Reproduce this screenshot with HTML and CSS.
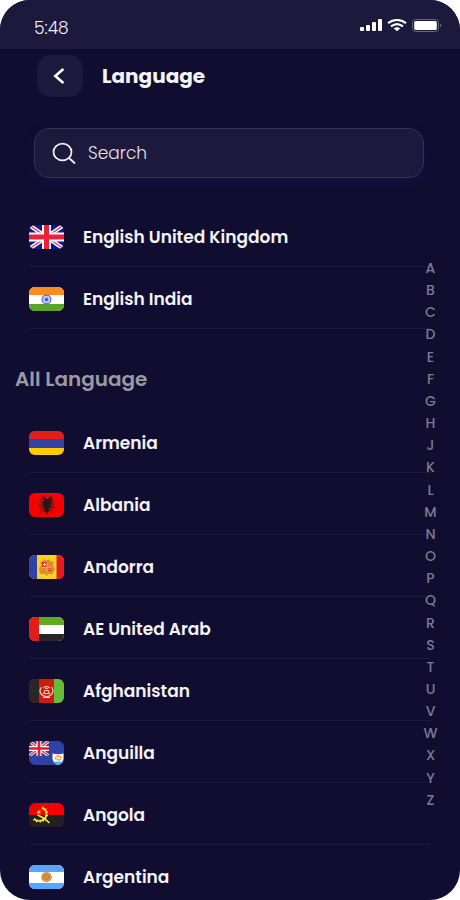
FILE: index.html
```html
<!DOCTYPE html>
<html lang="en">
<head>
<meta charset="utf-8">
<meta name="viewport" content="width=device-width, initial-scale=1">
<title>Language</title>
<link rel="stylesheet" href="styles.css">
</head>
<body>
<div class="screen">
  <div class="status">
    <span class="time">5:48</span>
    <div class="status-icons">
      <svg width="22" height="12" viewBox="0 0 22 12" fill="#fff" aria-hidden="true"><rect x="0" y="8" width="4" height="4" rx="1"/><rect x="6" y="6" width="4" height="6" rx="1"/><rect x="12" y="3" width="4" height="9" rx="1"/><rect x="18" y="0" width="4" height="12" rx="1"/></svg>
      <svg width="20" height="12" viewBox="0 0 20 12" aria-hidden="true"><g fill="none" stroke="#fff" stroke-width="2.200"><path d="M1 4.200Q10-2.200 19 4.200"/><path d="M4 7.400Q10 2.800 16 7.400"/></g><path d="M6.700 9.300Q10 7 13.300 9.300L10.600 11.700Q10 12.200 9.400 11.700Z" fill="#fff"/></svg>
      <svg width="30" height="13" viewBox="0 0 30 13" aria-hidden="true"><rect x=".5" y=".5" width="26" height="12" rx="3" fill="none" stroke="#686579"/><rect x="2.200" y="2" width="22.600" height="9" rx="1.500" fill="#fff"/><path d="M28 4.500Q31 6.500 28 8.500Z" fill="#686579"/></svg>
    </div>
  </div>
  <header class="top">
    <button class="back" type="button" aria-label="Back"><svg width="12" height="16" viewBox="0 0 12 16" fill="none" stroke="#fff" stroke-width="2.600" stroke-linecap="round" stroke-linejoin="miter"><path d="M9.500 1.700L2.300 8L9.500 14.300"/></svg></button>
    <h1>Language</h1>
  </header>
  <label class="search">
    <svg width="24" height="22" viewBox="0 0 24 22" fill="none" stroke="#eeedf3" stroke-width="1.800" stroke-linecap="round" aria-hidden="true"><ellipse cx="10.500" cy="10" rx="9" ry="8.400"/><path d="M17 16L22.500 21"/></svg>
    <input type="search" placeholder="Search" aria-label="Search">
  </label>
  <main class="content">
    <ul class="list">
      <li><svg class="flag" viewBox="0 0 35 24"><rect width="35" height="24" fill="#0b16a5"/><path d="M0 0L35 24M35 0L0 24" stroke="#fff" stroke-width="4.200"/><path d="M0 0L35 24M35 0L0 24" stroke="#e83552" stroke-width="1.300"/><path d="M17.500 0V24M0 12H35" stroke="#fff" stroke-width="9"/><path d="M17.500 0V24M0 12H35" stroke="#e8213c" stroke-width="5"/></svg><span>English United Kingdom</span></li>
      <li><svg class="flag" viewBox="0 0 35 24"><rect width="35" height="24" fill="#fff"/><rect width="35" height="8" fill="#ff8c1a"/><rect y="17" width="35" height="7" fill="#5ba626"/><circle cx="17.500" cy="12.500" r="4.400" fill="#dbe1fa" stroke="#5269d8" stroke-width="1.200"/><circle cx="17.500" cy="12.500" r="2" fill="#4a63dc"/><circle cx="17.500" cy="12.500" r="3" fill="none" stroke="#97a5ed" stroke-width=".8" stroke-dasharray="1 .6"/></svg><span>English India</span></li>
    </ul>
    <h2>All Language</h2>
    <ul class="list">
      <li><svg class="flag" viewBox="0 0 35 24"><rect width="35" height="24" fill="#3043a5"/><rect width="35" height="8" fill="#e31d1c"/><rect y="17" width="35" height="7" fill="#ffcb00"/></svg><span>Armenia</span></li>
      <li><svg class="flag" viewBox="0 0 35 24"><rect width="35" height="24" fill="#f90000"/><g fill="#291716"><path d="M17.500 6L15.500 3.500L12 4L14 5L12.500 7L15 7.500L14 10L16 14L15 18L17 19L17.800 23L18.800 19L20.500 18L19.500 14L22 10L21 7.500L23.500 7L22 5L24 4L20.500 3.500L18.500 6Z"/><path d="M13 8L23 8L21.500 14L18 17L14.500 14Z"/></g><g fill="none" stroke="#4a1513" stroke-width=".9"><path d="M15 12L11 5.500M15 13L10 8M15 14L9.500 11M15 14.500L9.500 14M15 15L10 18M16 16L12.500 20M20.500 12L24.500 5.500M20.500 13L25.500 8M20.500 14L26 11M20.500 14.500L26 14M20.500 15L25.500 18M19.500 16L23 20"/></g></svg><span>Albania</span></li>
      <li><svg class="flag" viewBox="0 0 35 24"><rect width="35" height="24" fill="#ffcf20"/><rect width="8" height="24" fill="#3043a5"/><rect x="27.500" width="7.500" height="24" fill="#e31d1c"/><path d="M11 7L14 6L15 4L17.500 5.500L20 4L21.500 6L25 7L24 10L26 14L23.500 19L19 19L17.500 21L16 19L11.500 19L9.800 14L12 10Z" fill="#c6993a"/><rect x="13" y="7" width="10" height="10" rx="1" fill="#f58027"/><path d="M13 7h5v5h-5z" fill="#e32b33"/><path d="M18.500 12.500h4v1h-4zM18.500 15h4v1h-4z" fill="#d63825"/><path d="M15.500 8v3M14 9.500h3" stroke="#efe1de"/><path d="M13 12.200h10M18 7v10" stroke="#ffd15d" stroke-width=".7"/></svg><span>Andorra</span></li>
      <li><svg class="flag" viewBox="0 0 35 24"><rect width="35" height="24" fill="#fff"/><rect width="35" height="8" fill="#5eaa22"/><rect y="17" width="35" height="7" fill="#272727"/><rect width="10" height="24" fill="#e31d1c"/></svg><span>AE United Arab</span></li>
      <li><svg class="flag" viewBox="0 0 35 24"><rect width="35" height="24" fill="#cf1b0b"/><rect width="10" height="24" fill="#272727"/><rect x="25" width="10" height="24" fill="#67bd38"/><g fill="none" stroke="#f0c9bd" stroke-width="1.200"><path d="M12.500 8Q9.500 12 12.500 15.500Q17.500 20 22.500 15.500Q25.500 12 22.500 8M14 18.500h7"/><path d="M14.500 14.500L16 11.500H19L20.500 14.500ZM14.500 9Q17.500 5.500 20.500 9M16.500 10Q17.500 8 18.500 10"/></g></svg><span>Afghanistan</span></li>
      <li><svg class="flag" viewBox="0 0 35 24"><rect width="35" height="24" fill="#3043a5"/><svg width="20" height="15" viewBox="0 0 20 15"><path d="M0 0L20 15M20 0L0 15" stroke="#fff" stroke-width="3"/><path d="M0 0L20 15M20 0L0 15" stroke="#e22b3b" stroke-width="1.300"/><path d="M10 0V15M0 7.500H20" stroke="#fff" stroke-width="5"/><path d="M10 0V15M0 7.500H20" stroke="#e31d2c" stroke-width="2.600"/></svg><path d="M23.500 12.500Q29 14 34.500 12.500V18Q34 22 29 24Q24 22 23.500 18Z" fill="#fff"/><path d="M24.500 20.500H34Q32 24 29 24Q26 23.500 24.500 20.500Z" fill="#42bdea"/><path d="M26.500 18.500Q26 14.500 30 15Q33 16 31.500 18.500Q29 20 27.500 17.500" fill="none" stroke="#f4a13b" stroke-width="1.400"/></svg><span>Anguilla</span></li>
      <li><svg class="flag" viewBox="0 0 35 24"><rect width="35" height="24" fill="#f50000"/><rect y="12" width="35" height="12" fill="#202020"/><path d="M13 5Q18 6 17.500 12Q16 18.500 9 18Q6.500 17.500 5 16" fill="none" stroke="#ffe24b" stroke-width="1.600"/><path d="M13 5Q18 6 17.500 12Q16 18.500 9 18Q6.500 17.500 5 16" fill="none" stroke="#ffe24b" stroke-width="3.200" stroke-dasharray="1 2"/><path d="M8.500 12Q14 14 20.500 20" fill="none" stroke="#ffe24b" stroke-width="1.600"/><path d="M9.500 6.500L10.400 8L12 7.500L11 9.200L12 10.800L10 10.300L8.700 11.300L8.700 9.800L7.500 9L9 8.400Z" fill="#ffd83f"/></svg><span>Angola</span></li>
      <li><svg class="flag" viewBox="0 0 35 24"><rect width="35" height="24" fill="#fff"/><rect width="35" height="7" fill="#58a5ff"/><rect y="18" width="35" height="6" fill="#58a5ff"/><circle cx="17.500" cy="12" r="4.600" fill="#d9a04b" stroke="#c48a43" stroke-width="1.400" stroke-dasharray="1.200 .6"/><circle cx="17.500" cy="12" r="2.400" fill="#e1913c" stroke="#a76c2e" stroke-width=".7"/></svg><span>Argentina</span></li>
    </ul>
  </main>
  <nav class="index" aria-label="Alphabet">
    <a href="#A">A</a><a href="#B">B</a><a href="#C">C</a><a href="#D">D</a><a href="#E">E</a><a href="#F">F</a><a href="#G">G</a><a href="#H">H</a><a href="#J">J</a><a href="#K">K</a><a href="#L">L</a><a href="#M">M</a><a href="#N">N</a><a href="#O">O</a><a href="#P">P</a><a href="#Q">Q</a><a href="#R">R</a><a href="#S">S</a><a href="#T">T</a><a href="#U">U</a><a href="#V">V</a><a href="#W">W</a><a href="#X">X</a><a href="#Y">Y</a><a href="#Z">Z</a>
  </nav>
</div>
</body>
</html>
```
FILE: styles.css
```css
* { box-sizing: border-box; }

body {
  margin: 0;
  background: #fff;
  font-family: Poppins, Inter, sans-serif;
  color: #f4f3f8;
}

.screen {
  position: relative;
  height: 100vh;
  overflow: hidden;
  border-radius: 30px;
  background: #100d30;
}

.status {
  display: flex;
  align-items: center;
  justify-content: space-between;
  height: 49px;
  padding: 7px 18px 0 34px;
  background: #1c193d;
}

.time {
  font-size: 17px;
  font-weight: 300;
}

.status-icons {
  display: flex;
  align-items: center;
  gap: 5px;
  padding-bottom: 6px;
}

.top {
  display: flex;
  align-items: center;
  gap: 19px;
  padding: 6px 37px 0;
}

.back {
  display: flex;
  align-items: center;
  justify-content: center;
  width: 46px;
  height: 42px;
  padding: 0 2px 0 0;
  border: 0;
  border-radius: 14px;
  background: #1c193d;
}

h1 {
  margin: 0;
  font-size: 20px;
  font-weight: 700;
}

.search {
  display: flex;
  align-items: center;
  gap: 12px;
  height: 50px;
  margin: 31px 36px 0 34px;
  padding: 0 17px;
  border: 1px solid #35314f;
  border-radius: 15px;
  background: #1c193d;
  box-shadow: 0 4px 10px #150f45;
}

.search input {
  flex: 1;
  min-width: 0;
  padding: 0;
  border: 0;
  outline: 0;
  background: none;
  color: inherit;
  font-family: inherit;
  font-size: 17px;
  font-weight: 300;
}

.search input::placeholder {
  color: #e4e3ea;
  opacity: 1;
}

.content { padding: 27px 29px 0; }

.list {
  margin: 0;
  padding: 0;
  list-style: none;
}

.list li {
  display: flex;
  align-items: center;
  gap: 19px;
  height: 62px;
  padding-top: 3px;
  border-bottom: 1px solid #1c193b;
  font-size: 17px;
  font-weight: 600;
}

.flag {
  flex: none;
  width: 35px;
  height: 24px;
  border-radius: 6px;
}

h2 {
  margin: 0 0 0 -14px;
  padding: 38px 0 20px;
  color: #9a9aa4;
  font-size: 20px;
  font-weight: 600;
  line-height: 24px;
}

.index {
  position: absolute;
  top: 257px;
  right: 19px;
  display: flex;
  flex-direction: column;
  justify-content: space-between;
  width: 21px;
  height: 554px;
  text-align: center;
}

.index a {
  color: #7d7a8d;
  font-size: 14px;
  font-weight: 500;
  line-height: 22px;
  text-decoration: none;
}
```
